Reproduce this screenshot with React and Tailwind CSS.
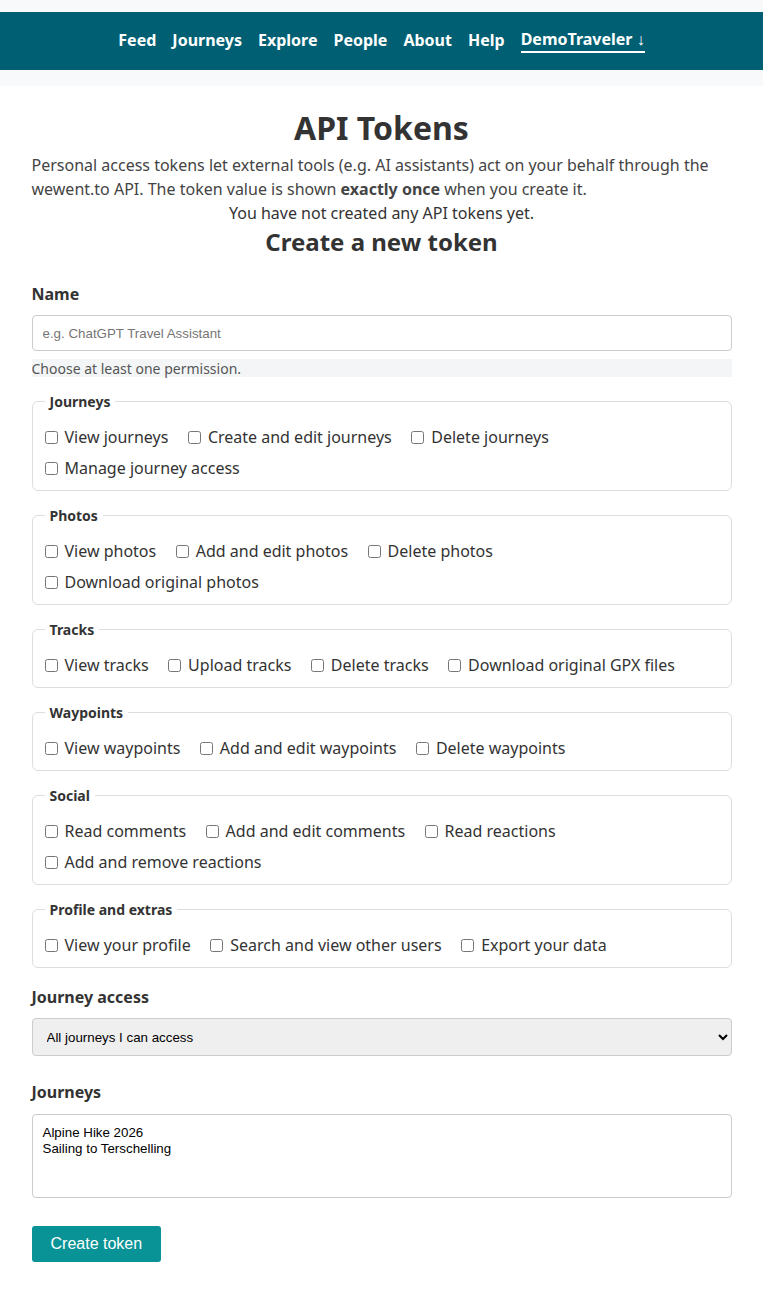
import React from "react";

const groups = [
  { title: "Journeys", items: ["View journeys", "Create and edit journeys", "Delete journeys", "Manage journey access"] },
  { title: "Photos", items: ["View photos", "Add and edit photos", "Delete photos", "Download original photos"] },
  { title: "Tracks", items: ["View tracks", "Upload tracks", "Delete tracks", "Download original GPX files"] },
  { title: "Waypoints", items: ["View waypoints", "Add and edit waypoints", "Delete waypoints"] },
  { title: "Social", items: ["Read comments", "Add and edit comments", "Read reactions", "Add and remove reactions"] },
  { title: "Profile and extras", items: ["View your profile", "Search and view other users", "Export your data"] },
];

const navItems = ["Feed", "Journeys", "Explore", "People", "About", "Help"];

export default function App() {
  return (
    <div className="min-h-[1295px] bg-[#f8f9fa] pt-3 font-['Noto_Sans',sans-serif] text-[#333]">
      <nav className="flex h-[58px] items-center justify-center gap-4 bg-[#005f73] pb-[2px] text-[16px] font-bold leading-6 text-white">
        {navItems.map((n) => (
          <a key={n} className="block">{n}</a>
        ))}
        <a className="block border-b-2 border-white">DemoTraveler ↓</a>
      </nav>
      <main className="mt-4 min-h-[1209px] bg-white">
        <div className="mx-auto max-w-[700px] pt-[23px] pb-8">
          <h1 className="text-center text-[32px] font-bold leading-[1.2] text-[#333]">API Tokens</h1>
          <p className="mt-[6px] text-[16px] leading-6 text-[#444]">
            Personal access tokens let external tools (e.g. AI assistants) act on your behalf through the wewent.to API. The token value is shown <strong className="font-bold">exactly once</strong> when you create it.
          </p>
          <p className="text-center text-[16px] leading-6 text-[#333]">You have not created any API tokens yet.</p>
          <h2 className="mt-[3px] text-center text-[24px] font-bold leading-[1.2] text-[#333]">Create a new token</h2>

          <label className="mt-[25px] block text-[16px] font-bold leading-6">Name</label>
          <input
            type="text"
            placeholder="e.g. ChatGPT Travel Assistant"
            className="mt-[9px] block h-9 w-full rounded-[4px] border border-[#ccc] bg-white px-2.5 font-['Liberation_Sans',Arial,sans-serif] text-[13.33px] text-[#333] placeholder:text-[#757575]"
          />
          <div className="mt-2 h-[18px] bg-[#f4f5f7] pt-px text-[14px] leading-[18px] text-[#555]">Choose at least one permission.</div>

          {groups.map((g) => (
            <fieldset key={g.title} className="mt-[14px] rounded-[6px] border border-[#ddd] px-3 pt-[13px] pb-[10px]">
              <legend className="px-[5px] text-[14px] font-bold leading-[21px] text-[#333]">{g.title}</legend>
              <div className="flex flex-wrap gap-x-[19.5px] gap-y-[7px]">
                {g.items.map((it) => (
                  <label key={it} className="flex items-center gap-[7px] text-[16px] leading-6 text-[#333]">
                    <input type="checkbox" className="m-0 h-[13px] w-[13px]" />
                    <span>{it}</span>
                  </label>
                ))}
              </div>
            </fieldset>
          ))}

          <label className="mt-[17px] block text-[16px] font-bold leading-6">Journey access</label>
          <select className="mt-[9px] block h-[38px] w-full rounded-[4px] border border-[#ccc] bg-[#efefef] px-2.5 font-['Liberation_Sans',Arial,sans-serif] text-[13.33px] text-black">
            <option>All journeys I can access</option>
            <option>Only selected journeys</option>
          </select>

          <label className="mt-[24px] block text-[16px] font-bold leading-6">Journeys</label>
          <select
            multiple
            className="mt-[10px] block h-[84px] w-full rounded-[4px] border border-[#ccc] bg-white p-2.5 font-['Liberation_Sans',Arial,sans-serif] text-[13.33px] text-black"
          >
            <option>Alpine Hike 2026</option>
            <option>Sailing to Terschelling</option>
          </select>

          <button className="mt-7 h-9 rounded-[3px] bg-[#0a9396] px-[19px] font-['Liberation_Sans',Arial,sans-serif] text-[16px] text-white">
            Create token
          </button>
        </div>
      </main>
    </div>
  );
}
